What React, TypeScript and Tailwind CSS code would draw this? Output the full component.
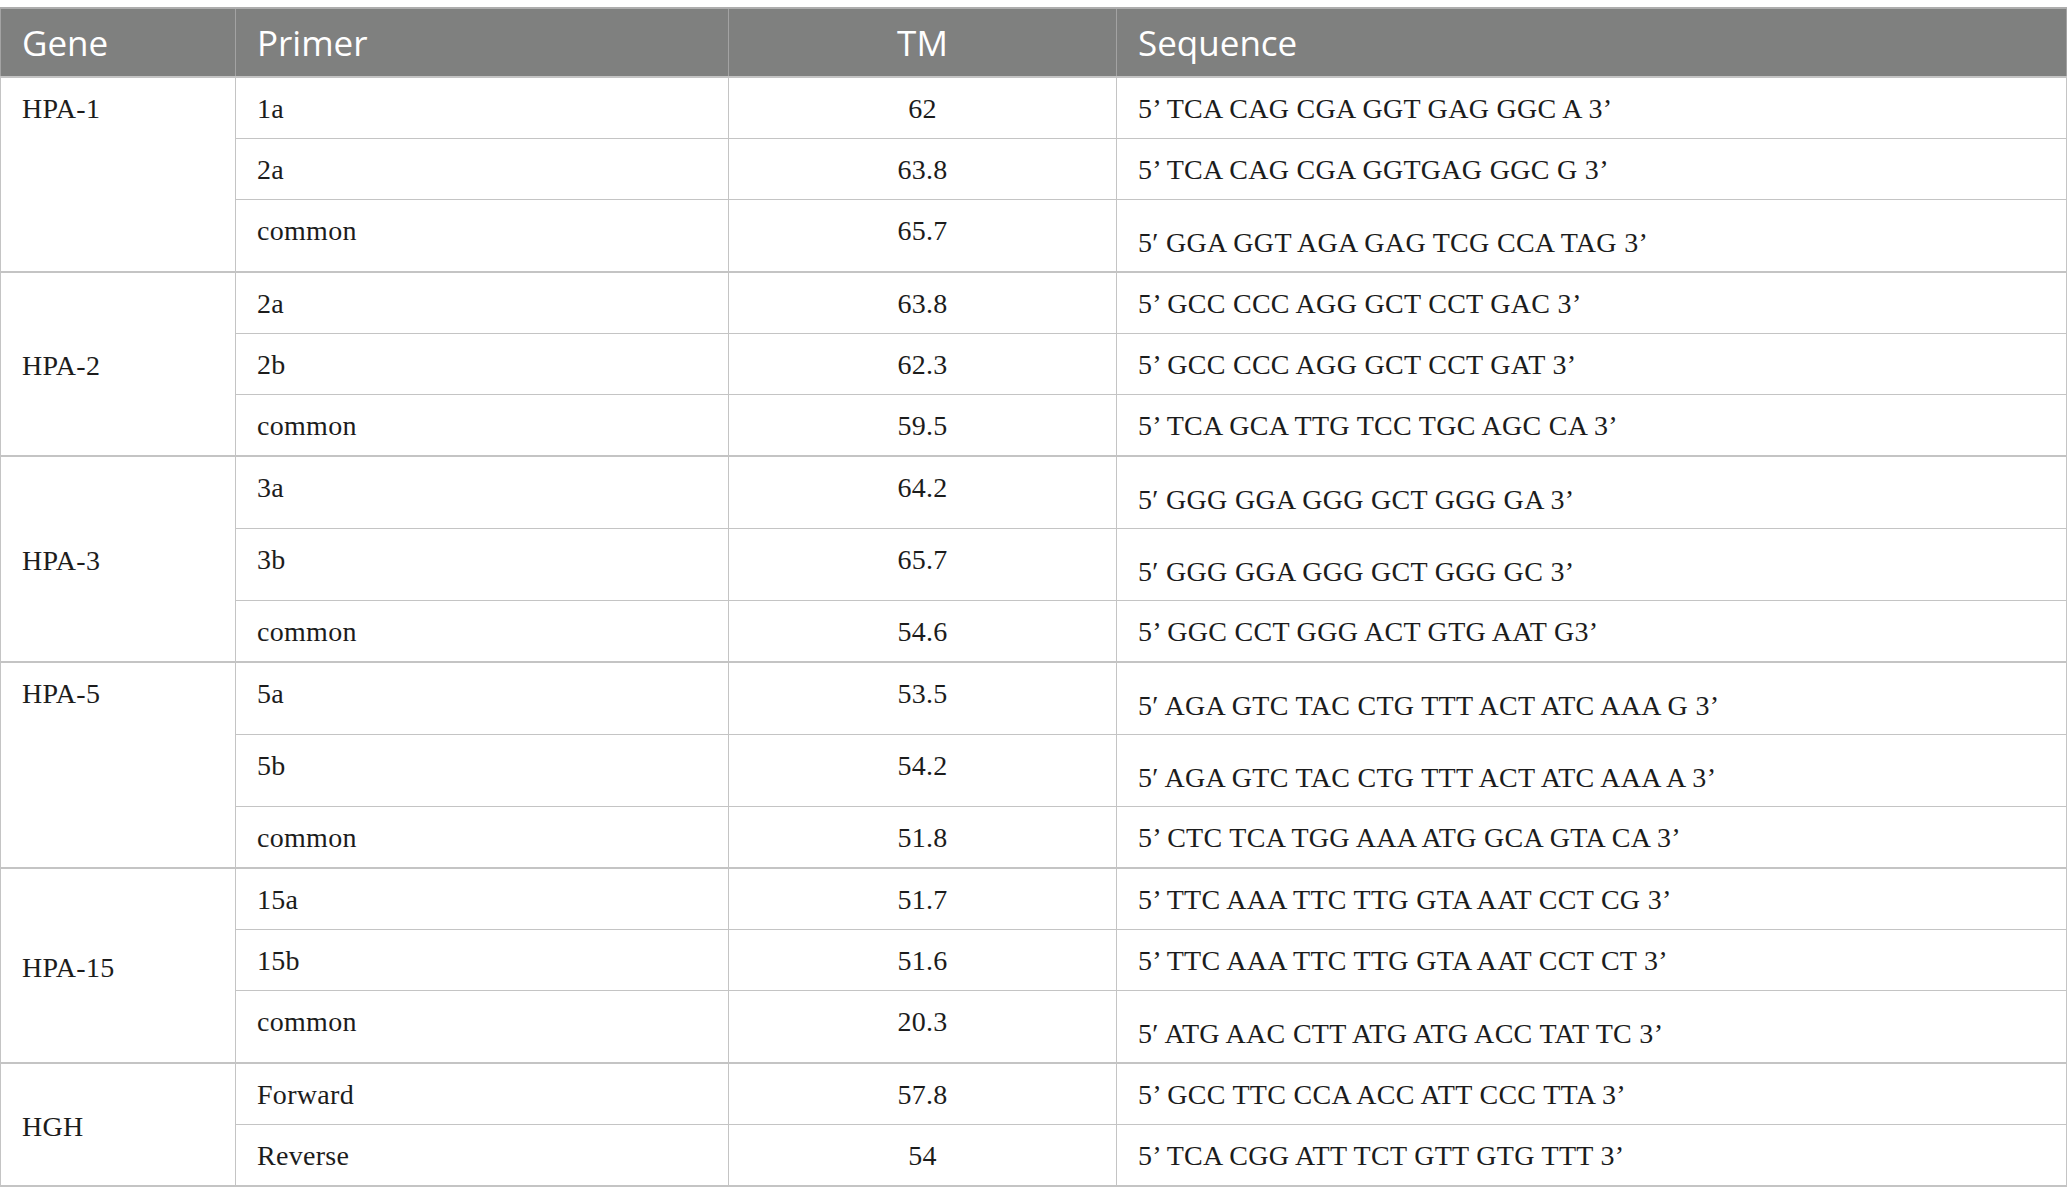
import React from "react";

type PrimerRow = {
  primer: string;
  tm: string;
  seq: string;
  prime?: boolean;
};

type GeneGroup = {
  gene: string;
  middle?: boolean;
  rows: PrimerRow[];
};

const groups: GeneGroup[] = [
  {
    gene: "HPA-1",
    rows: [
      { primer: "1a", tm: "62", seq: "5’ TCA CAG CGA GGT GAG GGC A 3’" },
      { primer: "2a", tm: "63.8", seq: "5’ TCA CAG CGA GGTGAG GGC G 3’" },
      { primer: "common", tm: "65.7", seq: "5′ GGA GGT AGA GAG TCG CCA TAG 3’", prime: true },
    ],
  },
  {
    gene: "HPA-2",
    middle: true,
    rows: [
      { primer: "2a", tm: "63.8", seq: "5’ GCC CCC AGG GCT CCT GAC 3’" },
      { primer: "2b", tm: "62.3", seq: "5’ GCC CCC AGG GCT CCT GAT 3’" },
      { primer: "common", tm: "59.5", seq: "5’ TCA GCA TTG TCC TGC AGC CA 3’" },
    ],
  },
  {
    gene: "HPA-3",
    middle: true,
    rows: [
      { primer: "3a", tm: "64.2", seq: "5′ GGG GGA GGG GCT GGG GA 3’", prime: true },
      { primer: "3b", tm: "65.7", seq: "5′ GGG GGA GGG GCT GGG GC 3’", prime: true },
      { primer: "common", tm: "54.6", seq: "5’ GGC CCT GGG ACT GTG AAT G3’" },
    ],
  },
  {
    gene: "HPA-5",
    rows: [
      { primer: "5a", tm: "53.5", seq: "5′ AGA GTC TAC CTG TTT ACT ATC AAA G 3’", prime: true },
      { primer: "5b", tm: "54.2", seq: "5′ AGA GTC TAC CTG TTT ACT ATC AAA A 3’", prime: true },
      { primer: "common", tm: "51.8", seq: "5’ CTC TCA TGG AAA ATG GCA GTA CA 3’" },
    ],
  },
  {
    gene: "HPA-15",
    middle: true,
    rows: [
      { primer: "15a", tm: "51.7", seq: "5’ TTC AAA TTC TTG GTA AAT CCT CG 3’" },
      { primer: "15b", tm: "51.6", seq: "5’ TTC AAA TTC TTG GTA AAT CCT CT 3’" },
      { primer: "common", tm: "20.3", seq: "5′ ATG AAC CTT ATG ATG ACC TAT TC 3’", prime: true },
    ],
  },
  {
    gene: "HGH",
    middle: true,
    rows: [
      { primer: "Forward", tm: "57.8", seq: "5’ GCC TTC CCA ACC ATT CCC TTA 3’" },
      { primer: "Reverse", tm: "54", seq: "5’ TCA CGG ATT TCT GTT GTG TTT 3’" },
    ],
  },
];

const cell = "border border-[#c4c4c4] px-[21px] pt-[14px] pb-[13px] leading-[33px] align-top";
const head = "border-x border-[#a3a3a3] px-[21px] font-normal text-white text-[35px] leading-[67px] tracking-normal";

export default function App() {
  return (
    <div className="min-h-screen bg-white pt-[7px]">
      <table
        className="w-full table-fixed border-collapse text-[28px] tracking-[0.3px] text-[#1c1c1c]"
        style={{ fontFamily: '"Liberation Serif", "Times New Roman", serif' }}
      >
        <colgroup>
          <col className="w-[235px]" />
          <col className="w-[493px]" />
          <col className="w-[388px]" />
          <col />
        </colgroup>
        <thead>
          <tr
            className="bg-[#7f807f] border-t-2 border-[#adadad]"
            style={{ fontFamily: '"Open Sans", "Noto Sans", sans-serif' }}
          >
            <th className={`${head} text-left`}>Gene</th>
            <th className={`${head} text-left`}>Primer</th>
            <th className={`${head} text-center`}>TM</th>
            <th className={`${head} text-left`}>Sequence</th>
          </tr>
        </thead>
        <tbody>
          {groups.map((g) =>
            g.rows.map((r, i) => {
              const groupTop = i === 0 ? "border-t-2" : "";
              const groupEnd = i === g.rows.length - 1 ? "border-b-2" : "";
              return (
                <tr key={g.gene + r.primer + i}>
                  {i === 0 && (
                    <td
                      rowSpan={g.rows.length}
                      className={`${cell} border-y-2 ${g.middle ? "!align-middle !pt-[3px] !pb-0" : ""}`}
                    >
                      {g.gene}
                    </td>
                  )}
                  <td className={`${cell} ${groupTop} ${groupEnd}`}>{r.primer}</td>
                  <td className={`${cell} ${groupTop} ${groupEnd} text-center`}>{r.tm}</td>
                  <td className={`${cell} ${groupTop} ${groupEnd} ${r.prime ? "!pt-[26px] !pb-[12px]" : ""}`}>
                    {r.seq}
                  </td>
                </tr>
              );
            })
          )}
        </tbody>
      </table>
    </div>
  );
}
